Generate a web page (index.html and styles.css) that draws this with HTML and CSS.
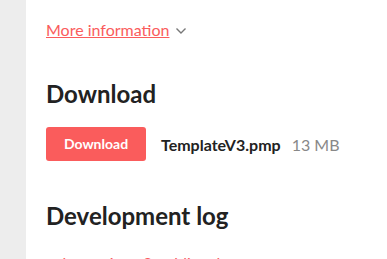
FILE: index.html
```html
<!DOCTYPE html>
<html lang="en">
<head>
    <meta charset="UTF-8">
    <meta name="viewport" content="width=device-width, initial-scale=1.0">
    <title>TemplateV3</title>
    <link rel="stylesheet" href="styles.css">
</head>
<body>
    <div class="page">
        <aside class="side"></aside>
        <main class="content">
            <div class="more-row">
                <a href="#" class="more-link">More information</a>
                <svg class="chevron" width="12" height="8" viewBox="0 0 12 8">
                    <polyline points="1.5,1.5 6,6 10.5,1.5" fill="none" stroke="#777" stroke-width="1.4"/>
                </svg>
            </div>

            <h2 class="download-title">Download</h2>
            <div class="upload">
                <a href="#" class="button">Download</a>
                <strong class="name">TemplateV3.pmp</strong>
                <span class="size">13 MB</span>
            </div>

            <h2 class="devlog-title">Development log</h2>
            <ul class="devlog">
                <li><a href="#">cube engine v2 public release</a> <span class="date">24 days ago</span></li>
            </ul>
        </main>
    </div>
</body>
</html>
```

FILE: styles.css
```css
body {
    margin: 0;
    padding: 0;
    font-family: Lato, "Liberation Sans", sans-serif;
    background-color: #fff;
    color: #222;
}
.page {
    display: flex;
    min-height: 259px;
}
.side {
    width: 26px;
    flex-shrink: 0;
    background-color: #ededed;
}
.content {
    padding: 20px 0 0 20px;
}
.more-row {
    display: flex;
    align-items: center;
    gap: 6px;
}
.more-link {
    font-size: 16px;
    color: #fa5c5c;
    text-decoration: underline;
}
.chevron {
    margin-top: 3px;
}
h2 {
    font-size: 24px;
    font-weight: 700;
    margin: 0;
    line-height: 30px;
}
.download-title {
    margin-top: 40px;
}
.devlog-title {
    margin-top: 40px;
}
.upload {
    display: flex;
    align-items: center;
    margin-top: 18px;
}
.button {
    display: inline-block;
    width: 100px;
    height: 34px;
    line-height: 34px;
    text-align: center;
    background-color: #fa5c5c;
    color: #fff;
    font-size: 14px;
    font-weight: 700;
    text-decoration: none;
    border-radius: 3px;
    box-sizing: border-box;
}
.name {
    font-size: 16px;
    margin-left: 15px;
}
.size {
    font-size: 16px;
    color: #888;
    margin-left: 11px;
}
.devlog {
    list-style: none;
    margin: 22px 0 0;
    padding: 0;
    font-size: 16px;
}
.devlog a {
    color: #fa5c5c;
    text-decoration: underline;
}
.date {
    color: #888;
    font-size: 14px;
    margin-left: 6px;
}
```
